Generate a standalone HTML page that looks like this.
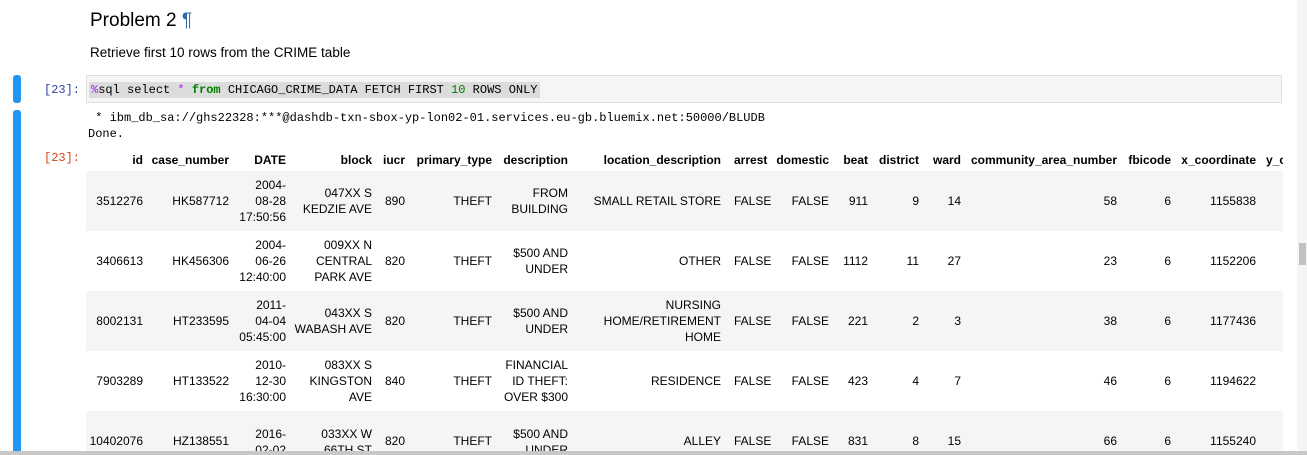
<!DOCTYPE html>
<html style="width:1307px;height:455px;overflow:hidden"><head><meta charset="utf-8"><style>
*{margin:0;padding:0;box-sizing:border-box}
body{width:1307px;height:455px;overflow:hidden;background:#fff;position:relative;font-family:"Liberation Sans",sans-serif;color:#000}
.a{position:absolute;white-space:nowrap}
.mono{font-family:"Liberation Mono",monospace;font-size:12px}
table{position:absolute;left:86px;top:149px;border-collapse:collapse;table-layout:fixed;font-size:12px;width:1197px}
td,th{text-align:right;padding:0 6px 0 0;overflow:hidden;white-space:nowrap;line-height:16px;vertical-align:middle}
th{height:22px;font-weight:bold}
tbody tr{height:60px}
tbody tr:nth-child(odd){background:#f5f5f5}
td.w{white-space:normal}
.s{display:block;position:relative;top:9px}
.l{text-align:left;padding:0 0 0 7px}
</style></head><body>
<div class="a" style="left:90px;top:10px;font-size:19px">Problem 2 <span style="color:#296eaa">¶</span></div>
<div class="a" style="left:90px;top:45px;font-size:13.5px">Retrieve first 10 rows from the CRIME table</div>

<div class="a" style="left:13px;top:75px;width:8px;height:28px;background:#2196f3;border-radius:3px"></div>
<div class="a mono" style="left:44px;top:83px;color:#303f9f">[23]:</div>
<div class="a" style="left:86px;top:75px;width:1196px;height:28px;background:#f5f5f5;border:1px solid #e0e0e0"></div>
<div class="a mono" style="left:89px;top:82px;background:#dcdcdc;padding:0 2px;line-height:16px"><span style="color:#aa22ff">%</span>sql select <span style="color:#aa22ff">*</span> <span style="color:#008000;font-weight:bold">from</span> CHICAGO_CRIME_DATA FETCH FIRST <span style="color:#008000">10</span> ROWS ONLY</div>

<div class="a" style="left:13px;top:110px;width:8px;height:345px;background:#2196f3;border-radius:3px"></div>
<div class="a mono" style="left:88px;top:111px;white-space:pre"> * ibm_db_sa://ghs22328:***@dashdb-txn-sbox-yp-lon02-01.services.eu-gb.bluemix.net:50000/BLUDB</div>
<div class="a mono" style="left:88px;top:127px">Done.</div>
<div class="a mono" style="left:44px;top:151px;color:#d84315">[23]:</div>

<table>
<colgroup><col style="width:63px"><col style="width:86px"><col style="width:57px"><col style="width:86px"><col style="width:32px"><col style="width:88px"><col style="width:76px"><col style="width:153px"><col style="width:46px"><col style="width:62px"><col style="width:39px"><col style="width:51px"><col style="width:42px"><col style="width:156px"><col style="width:54px"><col style="width:85px"><col style="width:21px"></colgroup>
<thead><tr><th>id</th><th>case_number</th><th>DATE</th><th>block</th><th class="l" style="padding-left:5px">iucr</th><th>primary_type</th><th>description</th><th>location_description</th><th class="l">arrest</th><th>domestic</th><th>beat</th><th>district</th><th>ward</th><th>community_area_number</th><th>fbicode</th><th>x_coordinate</th><th style="text-align:left;padding:0 0 0 4px">y_c</th></tr></thead>
<tbody>
<tr><td>3512276</td><td>HK587712</td><td class="w">2004-<br>08-28<br>17:50:56</td><td class="w">047XX S<br>KEDZIE AVE</td><td class="l">890</td><td>THEFT</td><td class="w">FROM<br>BUILDING</td><td>SMALL RETAIL STORE</td><td class="l">FALSE</td><td>FALSE</td><td>911</td><td>9</td><td>14</td><td>58</td><td>6</td><td>1155838</td><td></td></tr>
<tr><td>3406613</td><td>HK456306</td><td class="w">2004-<br>06-26<br>12:40:00</td><td class="w">009XX N<br>CENTRAL<br>PARK AVE</td><td class="l">820</td><td>THEFT</td><td class="w">$500 AND<br>UNDER</td><td>OTHER</td><td class="l">FALSE</td><td>FALSE</td><td>1112</td><td>11</td><td>27</td><td>23</td><td>6</td><td>1152206</td><td></td></tr>
<tr><td>8002131</td><td>HT233595</td><td class="w">2011-<br>04-04<br>05:45:00</td><td class="w">043XX S<br>WABASH AVE</td><td class="l">820</td><td>THEFT</td><td class="w">$500 AND<br>UNDER</td><td class="w">NURSING<br>HOME/RETIREMENT<br>HOME</td><td class="l">FALSE</td><td>FALSE</td><td>221</td><td>2</td><td>3</td><td>38</td><td>6</td><td>1177436</td><td></td></tr>
<tr><td>7903289</td><td>HT133522</td><td class="w">2010-<br>12-30<br>16:30:00</td><td class="w">083XX S<br>KINGSTON<br>AVE</td><td class="l">840</td><td>THEFT</td><td class="w">FINANCIAL<br>ID THEFT:<br>OVER $300</td><td>RESIDENCE</td><td class="l">FALSE</td><td>FALSE</td><td>423</td><td>4</td><td>7</td><td>46</td><td>6</td><td>1194622</td><td></td></tr>
<tr><td>10402076</td><td>HZ138551</td><td class="w"><span class="s">2016-<br>02-02<br>&nbsp;</span></td><td class="w"><span class="s">033XX W<br>66TH ST<br>&nbsp;</span></td><td class="l">820</td><td>THEFT</td><td class="w"><span class="s">$500 AND<br>UNDER<br>&nbsp;</span></td><td>ALLEY</td><td class="l">FALSE</td><td>FALSE</td><td>831</td><td>8</td><td>15</td><td>66</td><td>6</td><td>1155240</td><td></td></tr>
</tbody></table>

<div class="a" style="left:1297px;top:0;width:10px;height:455px;background:#f4f4f4"></div>
<div class="a" style="left:1299px;top:243px;width:7px;height:22px;background:#c1c1c1"></div>
<div class="a" style="left:0;top:451px;width:1307px;height:4px;background:#c8c8c8"></div>
</body></html>
